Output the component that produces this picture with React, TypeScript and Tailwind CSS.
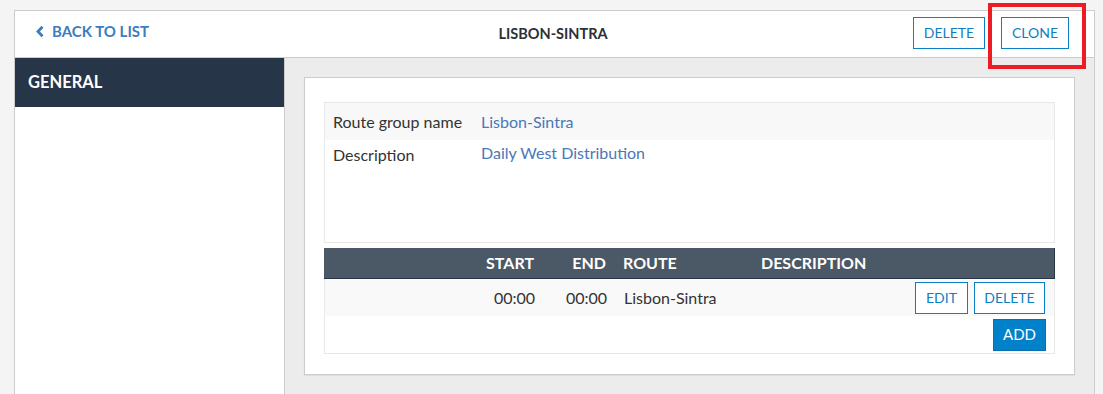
import React from "react";

const blue = "text-[#0a7fc4]";

function OutlineBtn({ children, className = "" }: { children: React.ReactNode; className?: string }) {
  return (
    <button
      className={`h-[32px] border border-[#0a7fc4] bg-white ${blue} text-[14px] leading-none flex items-center justify-center ${className}`}
    >
      {children}
    </button>
  );
}

export default function App() {
  return (
    <div
      className="bg-[#f4f4f4] min-h-[394px] pt-[10px] pl-[14px] overflow-hidden"
      style={{ fontFamily: "Lato, 'Open Sans', sans-serif" }}
    >
      <div className="w-[1081px] border border-[#cccccc] bg-white">
        {/* header */}
        <div className="h-[47px] border-b border-[#cccccc] flex items-center relative">
          <div className="flex items-center pl-[20px] w-[400px] text-[#3d7cc0] text-[15px] font-bold -mt-[6px]">
            <svg width="10" height="13" viewBox="0 0 10 13" className="mr-[7px]">
              <path d="M7.5 1.8 L3 6.5 L7.5 11.2" fill="none" stroke="#3d7cc0" strokeWidth="2.8" />
            </svg>
            BACK TO LIST
          </div>
          <div className="flex-1 text-center text-[#2d3136] text-[14.5px] font-bold -ml-[222px] mt-[-1px]">
            LISBON-SINTRA
          </div>
          <div className="flex items-center gap-[16px] pr-[25px] -mt-[2px]">
            <OutlineBtn className="w-[72px]">DELETE</OutlineBtn>
            <OutlineBtn className="w-[68px]">CLONE</OutlineBtn>
          </div>
          <div className="absolute left-[973px] top-[-8px] w-[98px] h-[66px] border-[4px] border-[#ed1c24] pointer-events-none" />
        </div>
        {/* body */}
        <div className="flex min-h-[340px]">
          <div className="w-[270px] border-r border-[#cccccc] bg-white shrink-0">
            <div className="h-[49px] bg-[#263547] text-white text-[16.5px] font-bold flex items-center pl-[13px]">
              GENERAL
            </div>
          </div>
          <div className="flex-1 bg-[#ececec] pt-[19px] px-[19px]">
            <div className="bg-white border border-[#cccccc] pt-[24px] pl-[19px] pr-[19px] pb-[20px] shadow-[0_1px_1px_rgba(0,0,0,0.06)]">
              <div className="border border-[#e8e8e8] h-[141px] text-[16px]">
                <div className="h-[37px] bg-[#f8f8f8] flex items-center">
                  <div className="w-[156px] pl-[8px] text-[#333333]">Route group name</div>
                  <div className="text-[#4a77b8]">Lisbon-Sintra</div>
                </div>
                <div className="flex pt-[2px]">
                  <div className="w-[156px] pl-[8px] text-[#333333] pt-[1px]">Description</div>
                  <div className="text-[#4a77b8] -mt-[1px]">Daily West Distribution</div>
                </div>
              </div>
              <div className="mt-[5px]">
                <div className="h-[31px] bg-[#4b5865] border border-[#263547] border-t-0 border-l-0 flex items-center text-white text-[16px] font-bold">
                  <div className="w-[146px]" />
                  <div className="w-[72px] text-right pr-[8px]">START</div>
                  <div className="w-[72px] text-right pr-[8px]">END</div>
                  <div className="w-[138px] pl-[9px]">ROUTE</div>
                  <div className="pl-[9px]">DESCRIPTION</div>
                </div>
                <div className="border border-t-0 border-[#e8e8e8]">
                  <div className="h-[37px] bg-[#f9f9f9] flex items-center text-[16px] text-[#333333]">
                    <div className="w-[146px]" />
                    <div className="w-[72px] text-right pr-[8px]">00:00</div>
                    <div className="w-[72px] text-right pr-[8px]">00:00</div>
                    <div className="w-[138px] pl-[9px]">Lisbon-Sintra</div>
                    <div className="flex-1" />
                    <div className="flex gap-[6px] pr-[9px]">
                      <OutlineBtn className="w-[53px]">EDIT</OutlineBtn>
                      <OutlineBtn className="w-[71px]">DELETE</OutlineBtn>
                    </div>
                  </div>
                  <div className="h-[37px] flex items-center justify-end pr-[8px]">
                    <button className="w-[53px] h-[32px] bg-[#0081c9] border border-[#0a6fae] text-white text-[15px] leading-none flex items-center justify-center">
                      ADD
                    </button>
                  </div>
                </div>
              </div>
            </div>
          </div>
        </div>
      </div>
    </div>
  );
}
